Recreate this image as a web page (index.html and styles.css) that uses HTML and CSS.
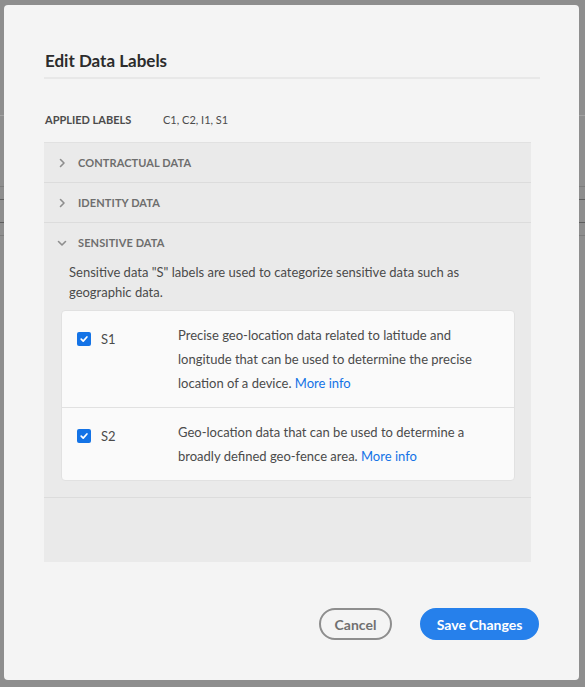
FILE: index.html
```html
<!DOCTYPE html>
<html lang="en">
<head>
<meta charset="utf-8">
<title>Edit Data Labels</title>
<link rel="stylesheet" href="styles.css">
</head>
<body>
<div class="backdrop">
  <div class="bd-dot bd-dot-top"></div>
  <div class="bd-line bd-line-light bd-l1"></div>
  <div class="bd-dot bd-dot-mid"></div>
  <div class="bd-line bd-l2"></div>
  <div class="bd-line bd-line-dark bd-l3"></div>
  <div class="bd-line bd-line-dark bd-l4"></div>
  <div class="bd-line bd-l5"></div>
</div>

<div class="modal" role="dialog" aria-labelledby="dlg-title">
  <h2 class="title" id="dlg-title">Edit Data Labels</h2>

  <div class="applied">
    <span class="applied-label">APPLIED LABELS</span>
    <span class="applied-value">C1, C2, I1, S1</span>
  </div>

  <div class="panel">
    <div class="acc-item">
      <div class="acc-header">
        <svg class="chev" width="10" height="10" viewBox="0 0 10 10"><path d="M3.5 1.5 L7 5 L3.5 8.5" fill="none" stroke="#8e8e8e" stroke-width="1.6" stroke-linecap="round" stroke-linejoin="round"/></svg>
        <span>CONTRACTUAL DATA</span>
      </div>
    </div>
    <div class="acc-item">
      <div class="acc-header">
        <svg class="chev" width="10" height="10" viewBox="0 0 10 10"><path d="M3.5 1.5 L7 5 L3.5 8.5" fill="none" stroke="#8e8e8e" stroke-width="1.6" stroke-linecap="round" stroke-linejoin="round"/></svg>
        <span>IDENTITY DATA</span>
      </div>
    </div>
    <div class="acc-item acc-open">
      <div class="acc-header">
        <svg class="chev" width="10" height="10" viewBox="0 0 10 10"><path d="M1.5 3.5 L5 7 L8.5 3.5" fill="none" stroke="#8e8e8e" stroke-width="1.6" stroke-linecap="round" stroke-linejoin="round"/></svg>
        <span>SENSITIVE DATA</span>
      </div>
      <div class="acc-body">
        <p class="acc-desc">Sensitive data "S" labels are used to categorize sensitive data such as geographic data.</p>
        <div class="card">
          <div class="card-row">
            <label class="check">
              <span class="box"><svg width="10" height="10" viewBox="0 0 10 10"><path d="M2.2 5.2 L4.2 7.1 L7.9 3" fill="none" stroke="#fff" stroke-width="1.7" stroke-linecap="round" stroke-linejoin="round"/></svg></span>
              <span class="check-text">S1</span>
            </label>
            <p class="row-desc">Precise geo-location data related to latitude and longitude that can be used to determine the precise location of a device. <a href="#" class="link">More info</a></p>
          </div>
          <div class="card-row">
            <label class="check">
              <span class="box"><svg width="10" height="10" viewBox="0 0 10 10"><path d="M2.2 5.2 L4.2 7.1 L7.9 3" fill="none" stroke="#fff" stroke-width="1.7" stroke-linecap="round" stroke-linejoin="round"/></svg></span>
              <span class="check-text">S2</span>
            </label>
            <p class="row-desc">Geo-location data that can be used to determine a broadly defined geo-fence area. <a href="#" class="link">More info</a></p>
          </div>
        </div>
      </div>
    </div>
  </div>

  <div class="footer">
    <button class="btn btn-secondary" type="button">Cancel</button>
    <button class="btn btn-primary" type="button">Save Changes</button>
  </div>
</div>
</body>
</html>
```

FILE: styles.css
```css
html, body {
  margin: 0;
  padding: 0;
}

body {
  width: 585px;
  height: 687px;
  background: #8e8e8e;
  overflow: hidden;
  position: relative;
  font-family: Lato, "Open Sans", sans-serif;
}

/* page behind the dialog */
.backdrop {
  display: flex;
  flex-direction: column;
  width: 585px;
}

.bd-dot {
  width: 6px;
  height: 8px;
  border-radius: 50%;
  border: 2px solid #3f3f3f;
  margin-left: -6px;
  box-sizing: border-box;
}

.bd-dot-top { margin-top: 24px; }
.bd-dot-mid { margin-top: 60px; border-color: #5a5a5a; }

.bd-line {
  height: 1px;
  background: #7c7c7c;
}

.bd-line-light { background: #a3a3a3; }
.bd-line-dark { background: #5e5e5e; }

.bd-l1 { margin-top: 83px; }
.bd-l2 { margin-top: 2px; }
.bd-l3 { margin-top: 12px; }
.bd-l4 { margin-top: 22px; }
.bd-l5 { margin-top: 12px; }

/* dialog */
.modal {
  position: absolute;
  left: 4px;
  top: 5px;
  width: 575px;
  height: 675px;
  box-sizing: border-box;
  background: #f4f4f4;
  border-radius: 4px;
  padding: 40px 39px 40px 40px;
  display: flex;
  flex-direction: column;
}

.title {
  margin: 0;
  font-size: 17px;
  font-weight: 700;
  color: #2c2c2c;
  line-height: 32px;
  padding-left: 1px;
  border-bottom: 2px solid #e8e8e8;
}

.applied {
  display: flex;
  align-items: center;
  height: 20px;
  margin-top: 30px;
  padding-left: 1px;
  color: #323232;
}

.applied-label {
  width: 118px;
  font-size: 11px;
  font-weight: 700;
  color: #4b4b4b;
}

.applied-value {
  font-size: 11px;
  color: #4b4b4b;
}

.panel {
  margin-top: 13px;
  width: 487px;
  height: 420px;
  background: #eaeaea;
  border-top: 1px solid #e1e1e1;
  box-sizing: border-box;
}

.acc-item {
  border-bottom: 1px solid #dcdcdc;
}

.acc-header {
  height: 39px;
  display: flex;
  align-items: center;
  padding-left: 13px;
  gap: 11px;
  font-size: 11px;
  font-weight: 700;
  letter-spacing: 0.1px;
  color: #6e6e6e;
}

.chev {
  flex: none;
}

.acc-body {
  padding: 0 16px 16px 17px;
}

.acc-desc {
  margin: 0 0 8px 8px;
  font-size: 13px;
  line-height: 20px;
  color: #4b4b4b;
}

.card {
  background: #fafafa;
  border: 1px solid #e1e1e1;
  border-radius: 4px;
}

.card-row {
  display: grid;
  grid-template-columns: 101px 1fr;
  padding: 12px 16px 12px 15px;
}

.card-row + .card-row {
  border-top: 1px solid #e1e1e1;
}

.check {
  display: flex;
  align-items: center;
  height: 32px;
  gap: 10px;
}

.box {
  width: 14px;
  height: 14px;
  border-radius: 2px;
  background: #1473e6;
  display: flex;
  align-items: center;
  justify-content: center;
}

.check-text {
  font-size: 13px;
  color: #4b4b4b;
}

.row-desc {
  margin: 0;
  font-size: 13px;
  line-height: 24px;
  color: #4b4b4b;
}

.link {
  color: #1473e6;
  text-decoration: none;
}

.footer {
  margin-top: auto;
  display: flex;
  justify-content: flex-end;
  gap: 28px;
  padding-right: 1px;
}

.btn {
  height: 32px;
  border-radius: 16px;
  font-family: inherit;
  font-size: 14px;
  font-weight: 700;
  box-sizing: border-box;
  cursor: pointer;
}

.btn-secondary {
  width: 73px;
  background: transparent;
  border: 2px solid #8e8e8e;
  color: #707070;
}

.btn-primary {
  width: 119px;
  background: #2680eb;
  border: 2px solid #2680eb;
  color: #fff;
}
```
